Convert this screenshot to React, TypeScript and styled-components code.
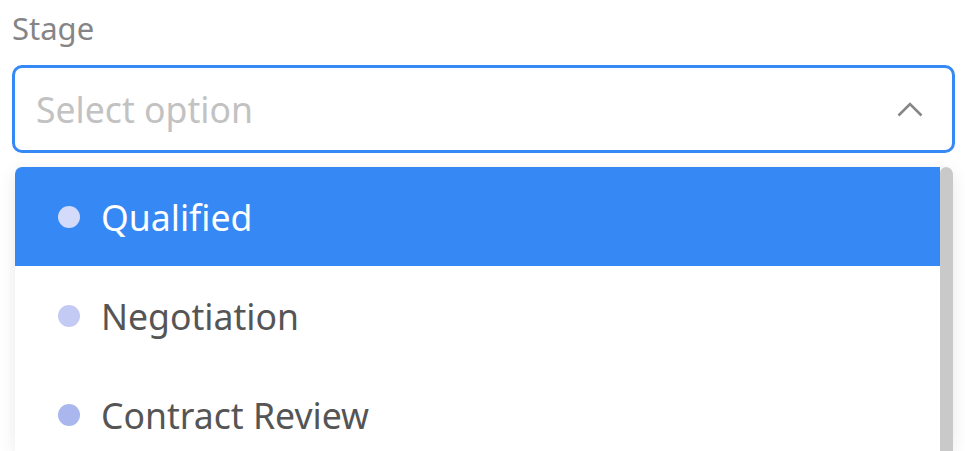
import React from "react";
import styled, { createGlobalStyle } from "styled-components";

const GlobalStyle = createGlobalStyle`
  html, body {
    margin: 0;
    padding: 0;
    background: #ffffff;
    overflow: hidden;
    font-family: "Noto Sans", "Open Sans", sans-serif;
  }
`;

const Field = styled.div`
  display: flex;
  flex-direction: column;
  padding: 8px 10px 0 12px;
`;

const Label = styled.label`
  font-size: 31px;
  line-height: 40px;
  color: #858585;
  margin-bottom: 17px;
`;

const Trigger = styled.div`
  display: flex;
  align-items: center;
  justify-content: space-between;
  box-sizing: border-box;
  height: 88px;
  padding: 0 29px 0 21px;
  border: 3px solid #3689f5;
  border-radius: 10px;
  background: #ffffff;
`;

const Placeholder = styled.span`
  font-size: 35.6px;
  color: #c2c2c2;
`;

const Menu = styled.div`
  display: flex;
  height: 284px;
  margin: 14px 2px 0 3px;
  overflow: hidden;
  border-radius: 7px 7px 0 0;
  background: #ffffff;
  box-shadow: 0 4px 18px rgba(0, 0, 0, 0.09);
`;

const List = styled.ul`
  flex: 1;
  list-style: none;
  margin: 0;
  padding: 0;
  overflow: hidden;
`;

const ScrollTrack = styled.div`
  flex: none;
  width: 13px;
  display: flex;
  flex-direction: column;
`;

const Thumb = styled.div`
  flex: 1;
  background: #c9c9c9;
  border-radius: 6px 6px 0 0;
`;

const Option = styled.li<{ $active?: boolean }>`
  display: flex;
  align-items: center;
  gap: 21px;
  height: 99px;
  padding-left: 43px;
  font-size: 35.6px;
  color: ${(p) => (p.$active ? "#ffffff" : "#555555")};
  background: ${(p) => (p.$active ? "#3689f5" : "#ffffff")};
`;

const Dot = styled.span<{ $color: string }>`
  flex: none;
  width: 22px;
  height: 22px;
  border-radius: 50%;
  background: ${(p) => p.$color};
`;

const Chevron = () => (
  <svg width="26" height="16" viewBox="0 0 26 16" fill="none">
    <polyline
      points="1.5,14.5 13,3 24.5,14.5"
      stroke="#868686"
      strokeWidth="2.6"
      strokeLinecap="butt"
      strokeLinejoin="miter"
    />
  </svg>
);

const options = [
  { label: "Qualified", color: "#d4dafa" },
  { label: "Negotiation", color: "#c3cbf4" },
  { label: "Contract Review", color: "#aab6ee" },
];

export default function App() {
  return (
    <>
      <GlobalStyle />
      <Field>
        <Label>Stage</Label>
        <Trigger>
          <Placeholder>Select option</Placeholder>
          <Chevron />
        </Trigger>
        <Menu>
          <List>
            {options.map((o, i) => (
              <Option key={o.label} $active={i === 0}>
                <Dot $color={o.color} />
                {o.label}
              </Option>
            ))}
          </List>
          <ScrollTrack>
            <Thumb />
          </ScrollTrack>
        </Menu>
      </Field>
    </>
  );
}
